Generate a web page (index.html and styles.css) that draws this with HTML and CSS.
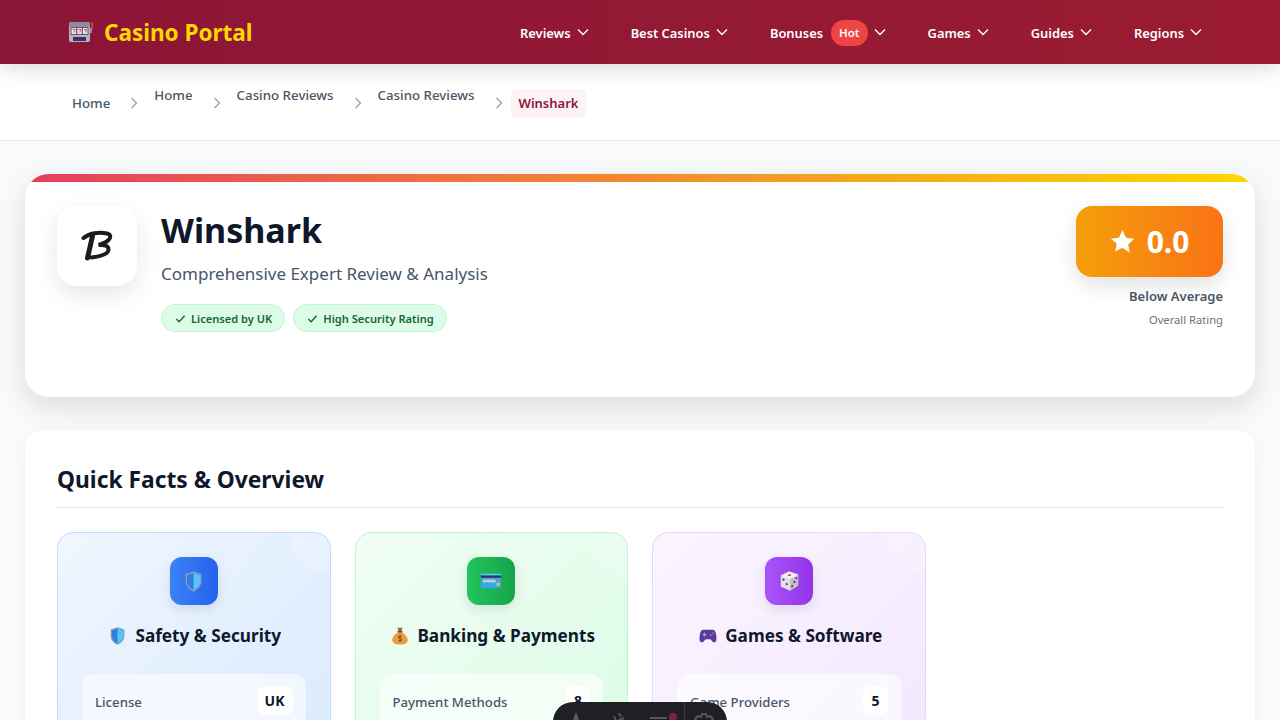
FILE: index.html
```html
<!DOCTYPE html>
<html lang="en">
<head>
  <meta charset="UTF-8">
  <meta name="viewport" content="width=device-width, initial-scale=1.0">
  <title>Winshark Review - Casino Portal</title>
  <link rel="stylesheet" href="styles.css">
</head>
<body>
  <svg class="sprites" width="0" height="0" aria-hidden="true">
    <symbol id="chevron" viewBox="0 0 12 8">
      <path d="M1 1.500l5 5 5-5" fill="none" stroke="currentColor" stroke-width="1.400"/>
    </symbol>
    <symbol id="crumb-chevron" viewBox="0 0 8 12">
      <path d="M1.500 1l5 5-5 5" fill="none" stroke="currentColor" stroke-width="1.400"/>
    </symbol>
    <symbol id="shield" viewBox="0 0 20 24">
      <path d="M10 1l8.500 3v8c0 5-3.500 8.500-8.500 11C5 20.500 1.500 17 1.500 12V4z" fill="#2f7fdc" stroke="#9a9fb5" stroke-width="1.500"/>
      <path d="M10 2l7.700 2.600V12c0 4.500-3.200 7.800-7.700 10z" fill="#55c5fb"/>
    </symbol>
    <symbol id="check" viewBox="0 0 12 12">
      <path d="M1.500 6.500l3 3L10.500 3" fill="none" stroke="currentColor" stroke-width="1.500"/>
    </symbol>
  </svg>

  <header class="topbar">
    <a class="brand" href="#">
      <svg class="brand-icon" viewBox="0 0 26 22">
        <rect x="1" y="1" width="21" height="20" rx="2" fill="#b5b4c0"/>
        <rect x="1" y="1" width="21" height="5" rx="2" fill="#8e8c9c"/>
        <rect x="2.500" y="6" width="18" height="8" fill="#5c5a78"/>
        <rect x="3.500" y="7" width="4.500" height="6" fill="#f6dfe6"/>
        <rect x="9.300" y="7" width="4.500" height="6" fill="#f6dfe6"/>
        <rect x="15" y="7" width="4.500" height="6" fill="#f6dfe6"/>
        <path d="M4.500 8.500h2.500l-1 3M10.300 8.500h2.500l-1 3M16 8.500h2.500l-1 3" fill="none" stroke="#e8446e" stroke-width="1"/>
        <rect x="5" y="16" width="13" height="4" fill="#3b2f5b"/>
        <rect x="22" y="7" width="2" height="5" fill="#8e8c9c"/>
        <rect x="23.500" y="1" width="1.500" height="7" fill="#d8475f"/>
      </svg>
      <span>Casino Portal</span>
    </a>
    <nav class="main-nav">
      <a href="#">Reviews <svg class="chevron"><use href="#chevron"/></svg></a>
      <a href="#">Best Casinos <svg class="chevron"><use href="#chevron"/></svg></a>
      <a href="#">Bonuses <span class="hot">Hot</span> <svg class="chevron"><use href="#chevron"/></svg></a>
      <a href="#">Games <svg class="chevron"><use href="#chevron"/></svg></a>
      <a href="#">Guides <svg class="chevron"><use href="#chevron"/></svg></a>
      <a href="#">Regions <svg class="chevron"><use href="#chevron"/></svg></a>
    </nav>
  </header>

  <div class="crumbs">
    <ol class="crumb-list">
      <li class="crumb">Home</li>
      <li class="sep"><svg class="sep-icon"><use href="#crumb-chevron"/></svg></li>
      <li class="crumb raised">Home</li>
      <li class="sep"><svg class="sep-icon"><use href="#crumb-chevron"/></svg></li>
      <li class="crumb raised">Casino Reviews</li>
      <li class="sep"><svg class="sep-icon"><use href="#crumb-chevron"/></svg></li>
      <li class="crumb raised">Casino Reviews</li>
      <li class="sep"><svg class="sep-icon"><use href="#crumb-chevron"/></svg></li>
      <li class="crumb current">Winshark</li>
    </ol>
  </div>

  <main class="content">
    <section class="hero">
      <div class="hero-main">
        <div class="logo-tile">
          <svg class="logo-mark" viewBox="0 0 32 32">
            <path d="M2.500 8C8 3.500 18 1.500 26 3.500c4 1 4 4 1.500 6.500-2.500 2.500-6 4-10 5 6-.5 10 .5 10 4.500 0 5-9 7-17 8" fill="none" stroke="#1c1c1c" stroke-width="4" stroke-linecap="round"/>
            <path d="M11.500 6L6.500 28" fill="none" stroke="#1c1c1c" stroke-width="5" stroke-linecap="round"/>
          </svg>
        </div>
        <div class="hero-text">
          <h1>Winshark</h1>
          <p class="subtitle">Comprehensive Expert Review &amp; Analysis</p>
          <div class="tags">
            <span class="tag"><svg class="check"><use href="#check"/></svg>Licensed by UK</span>
            <span class="tag"><svg class="check"><use href="#check"/></svg>High Security Rating</span>
          </div>
        </div>
      </div>
      <div class="rating">
        <div class="score">
          <svg class="star" viewBox="0 0 24 24"><path d="M12 1l3.400 7.300 7.900 1-5.800 5.500 1.500 7.900L12 18l-7 3.700 1.500-7.900L.7 9.300l7.900-1z" fill="#fff"/></svg>
          <span>0.0</span>
        </div>
        <div class="rating-label">Below Average</div>
        <div class="rating-note">Overall Rating</div>
      </div>
    </section>

    <section class="facts">
      <h2>Quick Facts &amp; Overview</h2>
      <div class="fact-grid">
        <article class="fact-card blue">
          <div class="fact-icon">
            <svg class="tile-shield"><use href="#shield"/></svg>
          </div>
          <h3><svg class="title-shield"><use href="#shield"/></svg>Safety &amp; Security</h3>
          <div class="fact-rows">
            <div class="fact-row"><span>License</span><b>UK</b></div>
          </div>
        </article>
        <article class="fact-card green">
          <div class="fact-icon">
            <svg class="tile-emoji" viewBox="0 0 24 24">
              <rect x="1" y="4" width="22" height="16" rx="1" fill="#38a9e0"/>
              <rect x="1" y="4" width="22" height="2" fill="#46d4e2"/>
              <rect x="1" y="6" width="22" height="2.500" fill="#3a2f63"/>
              <rect x="3" y="10.500" width="14" height="3" fill="#c4cbd6"/>
              <rect x="18" y="14" width="3.500" height="3" fill="#f3c041"/>
            </svg>
          </div>
          <h3>
            <svg class="title-emoji" viewBox="0 0 20 22">
              <path d="M7 1h6l-1.500 5h-3z" fill="#b5622a"/>
              <rect x="7" y="5" width="6" height="2" fill="#7c4321"/>
              <path d="M7 7C3 9 .5 13 .5 16c0 4 4 5.500 9.500 5.500s9.500-1.500 9.500-5.500c0-3-2.500-7-6.500-9z" fill="#ef9a3c"/>
              <path d="M12 11.500c-2-1-4-.5-4 1s4 1 4 3-2.500 2-4 1M10 9.800v8.500" fill="none" stroke="#7c4321" stroke-width="1.200"/>
            </svg>Banking &amp; Payments
          </h3>
          <div class="fact-rows">
            <div class="fact-row"><span>Payment Methods</span><b>8</b></div>
          </div>
        </article>
        <article class="fact-card purple">
          <div class="fact-icon">
            <svg class="tile-emoji" viewBox="0 0 24 24">
              <path d="M12 1.500l10 3.500v12l-9 5.500-10-4.500V6z" fill="#e3e1e6"/>
              <path d="M13 10l9-5v12l-9 5.500z" fill="#c3bfc9"/>
              <path d="M12 1.500l10 3.500-9 5L3 6z" fill="#f1eff3"/>
              <ellipse cx="12.500" cy="5.500" rx="2" ry="1" fill="#d8394f"/>
              <circle cx="6" cy="10.500" r="1.200" fill="#4c3d74"/>
              <circle cx="9.500" cy="15.500" r="1.200" fill="#4c3d74"/>
              <circle cx="15.500" cy="17.500" r="1.200" fill="#4c3d74"/>
              <circle cx="18" cy="13" r="1.200" fill="#4c3d74"/>
              <circle cx="20" cy="9" r="1.200" fill="#4c3d74"/>
            </svg>
          </div>
          <h3>
            <svg class="title-emoji" viewBox="0 0 20 16">
              <path d="M5 1h10c2.500 0 3.500 2 4 5 .5 4 1 8-1.500 9-2 .8-3.500-2.500-5-3.500h-5c-1.500 1-3 4.300-5 3.500C0 14 .5 10 1 6c.5-3 1.500-5 4-5z" fill="#5b3a9b"/>
              <path d="M4 6.500h4M6 4.500v4" stroke="#b5a5e0" stroke-width="1.200"/>
              <circle cx="13" cy="7" r="1" fill="#4fd0a0"/>
              <circle cx="15.500" cy="5" r="1" fill="#e86b8a"/>
            </svg>Games &amp; Software
          </h3>
          <div class="fact-rows">
            <div class="fact-row"><span>Game Providers</span><b>5</b></div>
          </div>
        </article>
      </div>
    </section>
  </main>

  <div class="dock">
    <svg class="dock-icon" viewBox="0 0 20 20"><path d="M4 22L10 3l6 19M7 15h6" fill="none" stroke="#5b5c61" stroke-width="3"/></svg>
    <svg class="dock-icon dock-pen" viewBox="0 0 20 20"><path d="M1 13L18 5M8 3l2 5M13 0l2 4" fill="none" stroke="#55565b" stroke-width="2"/></svg>
    <svg class="dock-slider" viewBox="0 0 28 12"><path d="M0 5h17" stroke="#6a6b70" stroke-width="1.500"/><circle cx="23" cy="4" r="4" fill="#7d2440"/></svg>
    <span class="dock-line"></span>
    <svg class="dock-icon dock-gear" viewBox="0 0 20 20"><path d="M7 4l1-3h4l1 3 3-1 3 3-2 3 2 2v6H1v-6l2-2-2-3 3-3z" fill="none" stroke="#55565b" stroke-width="2"/></svg>
  </div>
</body>
</html>
```

FILE: styles.css
```css
* {
  box-sizing: border-box;
}

html,
body {
  height: 720px;
  overflow: hidden;
}

body {
  margin: 0;
  font-family: "Noto Sans", "Open Sans", Arial, sans-serif;
  background-color: #f8fafc;
  color: #0f172a;
}

.sprites {
  display: block;
  height: 0;
}

.topbar {
  height: 64px;
  padding: 0 78px 0 68px;
  display: flex;
  align-items: center;
  justify-content: space-between;
  background: linear-gradient(90deg, #8b1538, #9b1c31);
  box-shadow: 0 4px 20px rgba(0, 0, 0, 0.15);
  position: relative;
}

.brand {
  display: flex;
  align-items: center;
  gap: 10px;
  color: #ffd700;
  font-size: 22.5px;
  font-weight: 700;
  text-decoration: none;
}

.brand-icon {
  width: 26px;
  height: 22px;
}

.main-nav {
  display: flex;
  align-items: center;
  gap: 42px;
}

.main-nav a {
  display: flex;
  align-items: center;
  gap: 6px;
  padding-top: 1px;
  color: #fff;
  font-size: 12.9px;
  font-weight: 600;
  text-decoration: none;
}

.chevron {
  width: 12px;
  height: 8px;
  margin-top: -1px;
}

.hot {
  height: 26px;
  padding: 0 8px;
  margin-left: 2px;
  display: flex;
  align-items: center;
  background-color: #ef4444;
  border-radius: 13px;
  font-size: 11.5px;
}

.crumbs {
  height: 77px;
  padding: 2px 72px 0;
  display: flex;
  align-items: center;
  background-color: #fff;
  border-bottom: 1px solid #e5e7eb;
}

.crumb-list {
  list-style: none;
  margin: 0;
  padding: 0;
  display: flex;
  align-items: center;
  font-size: 13.3px;
  font-weight: 500;
  color: #4b5563;
}

.raised {
  padding-bottom: 16px;
}

.sep {
  display: flex;
  margin: 0 16px 0 20px;
  color: #9ca3af;
}

.sep-icon {
  width: 8px;
  height: 12px;
}

.current {
  height: 29px;
  padding: 0 8px;
  margin-left: -8px;
  display: flex;
  align-items: center;
  background-color: #fdf2f6;
  border-radius: 6px;
  color: #8b1538;
  font-size: 13px;
  font-weight: 600;
}

.content {
  padding: 33px 25px 0;
}

.hero {
  height: 223px;
  padding: 32px;
  position: relative;
  overflow: hidden;
  display: flex;
  justify-content: space-between;
  align-items: flex-start;
  background-color: #fff;
  border-radius: 24px;
  box-shadow: 0 10px 30px rgba(0, 0, 0, 0.12);
}

.hero::before {
  content: "";
  position: absolute;
  top: 0;
  left: 0;
  right: 0;
  height: 8px;
  background: linear-gradient(90deg, #e63e5f, #ffd700);
}

.hero-main {
  display: flex;
  gap: 24px;
}

.logo-tile {
  width: 80px;
  height: 80px;
  flex-shrink: 0;
  display: flex;
  align-items: center;
  justify-content: center;
  background-color: #fff;
  border-radius: 20px;
  box-shadow: 0 8px 24px rgba(0, 0, 0, 0.1);
}

.logo-mark {
  width: 32px;
  height: 32px;
}

.hero-text h1 {
  margin: 0;
  font-size: 34px;
  line-height: 48px;
  font-weight: 700;
}

.subtitle {
  margin: 8px 0 18px;
  font-size: 17px;
  line-height: 24px;
  color: #475569;
}

.tags {
  display: flex;
  gap: 8px;
}

.tag {
  height: 28px;
  padding: 0 12px 0 13px;
  display: flex;
  align-items: center;
  gap: 5px;
  background-color: #dcfce7;
  border: 1px solid #bbf7d0;
  border-radius: 14px;
  color: #166534;
  font-size: 11.1px;
  font-weight: 600;
}

.check {
  width: 11px;
  height: 11px;
}

.rating {
  text-align: right;
}

.score {
  width: 147px;
  height: 71px;
  margin-bottom: 10px;
  display: flex;
  align-items: center;
  justify-content: center;
  gap: 12px;
  background: linear-gradient(90deg, #f59e0b, #f97316);
  border-radius: 16px;
  box-shadow: 0 8px 20px rgba(0, 0, 0, 0.12);
  color: #fff;
  font-size: 30px;
  font-weight: 700;
}

.star {
  width: 25px;
  height: 25px;
}

.rating-label {
  font-size: 13px;
  line-height: 18px;
  font-weight: 600;
  color: #4b5563;
}

.rating-note {
  margin-top: 7px;
  font-size: 11.2px;
  line-height: 16px;
  color: #6b7280;
}

.facts {
  margin-top: 33px;
  padding: 33px 32px 32px;
  background-color: #fff;
  border-radius: 20px;
  box-shadow: 0 4px 20px rgba(0, 0, 0, 0.04);
}

.facts h2 {
  margin: 0 0 24px;
  padding-bottom: 11px;
  border-bottom: 1px solid #e5e7eb;
  font-size: 22.8px;
  line-height: 33px;
  font-weight: 700;
}

.fact-grid {
  display: grid;
  grid-template-columns: repeat(4, 1fr);
  gap: 24px;
}

.fact-card {
  padding: 24px;
  position: relative;
  overflow: hidden;
  border: 1px solid;
  border-radius: 16px;
  text-align: center;
}

.fact-card::before {
  content: "";
  position: absolute;
  top: -40px;
  right: -40px;
  width: 80px;
  height: 80px;
  border-radius: 50%;
  background-color: rgba(255, 255, 255, 0.2);
}

.blue {
  background: linear-gradient(135deg, #eff6ff, #dbeafe);
  border-color: #bfdbfe;
}

.green {
  background: linear-gradient(135deg, #f0fdf4, #dcfce7);
  border-color: #bbf7d0;
}

.purple {
  background: linear-gradient(135deg, #faf5ff, #f3e8ff);
  border-color: #e9d5ff;
}

.fact-icon {
  width: 48px;
  height: 48px;
  margin: 0 auto 18px;
  display: flex;
  align-items: center;
  justify-content: center;
  border-radius: 12px;
  box-shadow: 0 4px 12px rgba(0, 0, 0, 0.1);
}

.blue .fact-icon {
  background: linear-gradient(90deg, #3b82f6, #2563eb);
}

.green .fact-icon {
  background: linear-gradient(90deg, #22c55e, #16a34a);
}

.purple .fact-icon {
  background: linear-gradient(90deg, #a855f7, #9333ea);
}

.tile-shield {
  width: 17px;
  height: 21px;
}

.tile-emoji {
  width: 22px;
  height: 22px;
}

.fact-card h3 {
  margin: 0 0 25px;
  padding-left: 4px;
  display: flex;
  align-items: center;
  justify-content: center;
  gap: 8px;
  font-size: 17.2px;
  line-height: 26px;
  font-weight: 700;
}

.title-shield {
  width: 15px;
  height: 18px;
  margin-right: 2px;
}

.title-emoji {
  width: 18px;
  height: 18px;
}

.fact-rows {
  padding: 12px 13px;
  background-color: rgba(255, 255, 255, 0.6);
  border-radius: 12px;
}

.fact-row {
  display: flex;
  align-items: center;
  justify-content: space-between;
  font-size: 13.2px;
  font-weight: 500;
  color: #475569;
}

.fact-row span {
  padding-top: 2px;
}

.fact-row b {
  min-width: 24px;
  padding: 4px 8px;
  background-color: #fff;
  border-radius: 8px;
  color: #0f172a;
  font-size: 14px;
  line-height: 21px;
  text-align: center;
}

.dock {
  position: fixed;
  left: 553px;
  top: 702px;
  width: 174px;
  height: 40px;
  padding: 11px 0 0 13px;
  display: flex;
  align-items: flex-start;
  background-color: #1f2024;
  border-radius: 20px;
}

.dock-icon {
  width: 20px;
  height: 20px;
  flex-shrink: 0;
}

.dock-pen {
  margin-left: 20px;
}

.dock-slider {
  width: 28px;
  height: 12px;
  margin-left: 24px;
}

.dock-line {
  width: 1px;
  height: 30px;
  margin: -11px 0 0 6px;
  background-color: #3a3b40;
}

.dock-gear {
  margin-left: 9px;
}
```
